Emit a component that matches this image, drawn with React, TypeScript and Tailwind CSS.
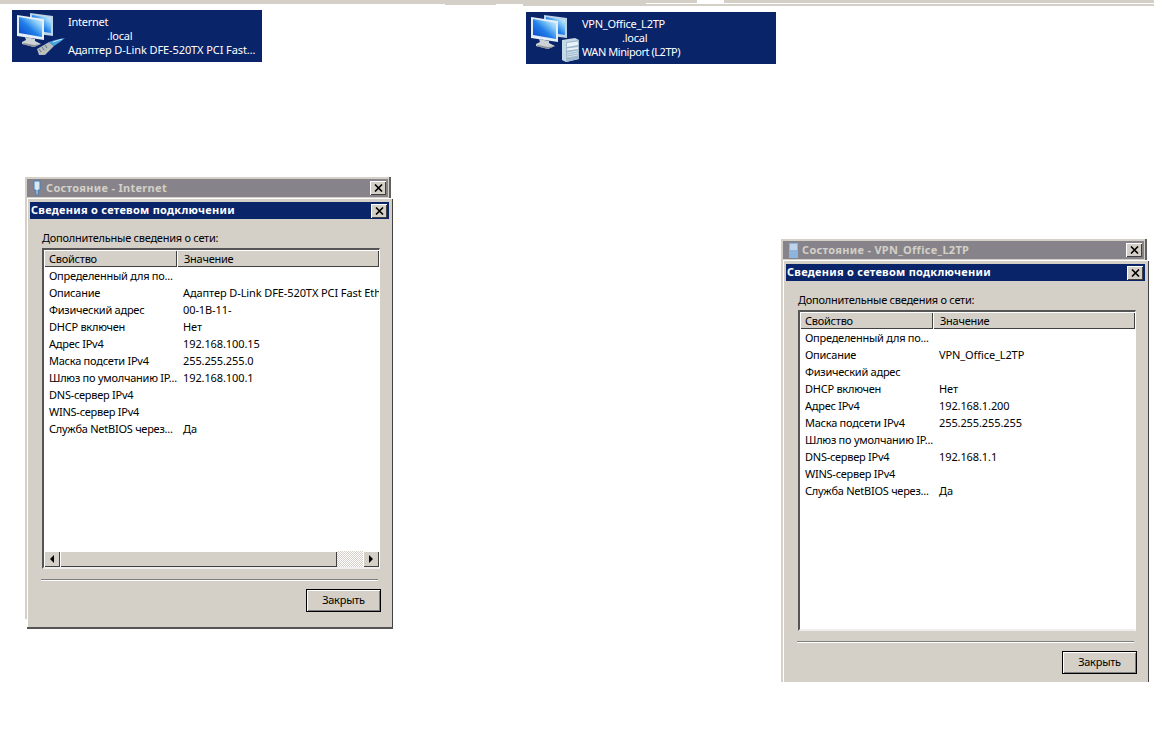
const font = "font-['Noto_Sans','Liberation_Sans',sans-serif]";

type Row = [string, string];

const internetRows: Row[] = [
  ["Определенный для по...", ""],
  ["Описание", "Адаптер D-Link DFE-520TX PCI Fast Ethernet Adapter"],
  ["Физический адрес", "00-1B-11-"],
  ["DHCP включен", "Нет"],
  ["Адрес IPv4", "192.168.100.15"],
  ["Маска подсети IPv4", "255.255.255.0"],
  ["Шлюз по умолчанию IP...", "192.168.100.1"],
  ["DNS-сервер IPv4", ""],
  ["WINS-сервер IPv4", ""],
  ["Служба NetBIOS через...", "Да"],
];

const vpnRows: Row[] = [
  ["Определенный для по...", ""],
  ["Описание", "VPN_Office_L2TP"],
  ["Физический адрес", ""],
  ["DHCP включен", "Нет"],
  ["Адрес IPv4", "192.168.1.200"],
  ["Маска подсети IPv4", "255.255.255.255"],
  ["Шлюз по умолчанию IP...", ""],
  ["DNS-сервер IPv4", "192.168.1.1"],
  ["WINS-сервер IPv4", ""],
  ["Служба NetBIOS через...", "Да"],
];

function Monitors({ id }: { id: string }) {
  return (
    <>
      <defs>
        <linearGradient id={id} x1="0" y1="1" x2="1" y2="0">
          <stop offset="0" stopColor="#0a3fc8" />
          <stop offset="0.45" stopColor="#1f7fe8" />
          <stop offset="0.75" stopColor="#8fd0fa" />
          <stop offset="1" stopColor="#e6f6ff" />
        </linearGradient>
      </defs>
      {/* back monitor */}
      <path d="M14 1 L37 4 L37 24 L14 21 Z" fill="#bcd4e8" />
      <path d="M16 3 L35 6 L35 21 L16 18 Z" fill={`url(#${id})`} />
      {/* front monitor */}
      <path d="M1 3 L28 7 L28 28 L1 24 Z" fill="#e4eef6" />
      <path d="M3 5 L26 9 L26 25 L3 21 Z" fill={`url(#${id})`} />
      {/* stand */}
      <path d="M9 25 L19 27 L19 29 L25 32 L18 35 L6 32 L6 30 L10 28 Z" fill="#cdd2d6" />
      <path d="M6 32 L18 35 L25 32 L18 33 L8 31 Z" fill="#8c9298" />
    </>
  );
}

function NetIcon() {
  return (
    <svg width="50" height="46" viewBox="0 0 50 46" className="shrink-0">
      <Monitors id="screen-net" />
      <path d="M21 37 L33 30 L38 34 L29 43 L23 43 Z" fill="#b4bdc0" />
      <path d="M23 37 L25 40 M26 35 L28 38 M29 33 L31 36" stroke="#6a767b" strokeWidth="1" />
      <path d="M25 42 L28 39 M29 41 L33 37" stroke="#d9c98a" strokeWidth="1" />
      <path d="M33 30 L39 28 L49 26 L44 30 L38 34 Z" fill="#49a5e0" />
      <path d="M37 30 L46 27" stroke="#bfe6fa" strokeWidth="1" />
    </svg>
  );
}

function TowerIcon() {
  return (
    <svg width="50" height="48" viewBox="0 0 50 48" className="shrink-0">
      <Monitors id="screen-vpn" />
      <path d="M32 26 L45 24 L49 26 L49 45 L36 48 L32 46 Z" fill="#c7d8e6" />
      <path d="M36 28 L49 26 L49 45 L36 48 Z" fill="#9fb9cf" />
      <path d="M37 29 L48 27.5 L48 31 L37 33 Z M37 34.5 L48 33 L48 35 L37 36.5 Z" fill="#eaf2f8" />
      <path d="M37 39 L48 37 M37 41 L48 39 M37 43 L48 41" stroke="#d6e3ee" strokeWidth="1" />
    </svg>
  );
}

function Banner({
  name,
  device,
  icon,
  dotLeft,
  deviceTracking,
}: {
  name: string;
  device: string;
  icon: React.ReactNode;
  dotLeft: string;
  deviceTracking: string;
}) {
  return (
    <div className={`flex h-[52px] w-[250px] bg-[#0a246a] pl-[4px] pt-[2px] text-[11px] leading-[14px] text-white ${font}`}>
      <div className="w-[52px] shrink-0">{icon}</div>
      <div className="pt-[3px] whitespace-nowrap tracking-[-0.25px]">
        <div>{name}</div>
        <div className={dotLeft}>.local</div>
        <div className={deviceTracking}>{device}</div>
      </div>
    </div>
  );
}

function CloseBtn() {
  return (
    <div className="flex h-[14px] w-[16px] items-center justify-center bg-[#d4d0c8] shadow-[inset_1px_1px_0_#fff,inset_-1px_-1px_0_#404040]">
      <svg width="9" height="8" viewBox="0 0 9 8">
        <path d="M1 0.5 L8 7.5 M8 0.5 L1 7.5" stroke="#000" strokeWidth="1.6" />
      </svg>
    </div>
  );
}

function HeaderCell({ label, className }: { label: string; className: string }) {
  return (
    <div className={`h-[17px] bg-[#d4d0c8] leading-[18px] shadow-[inset_1px_1px_0_#fff,inset_-1px_-1px_0_#404040] ${className}`}>
      {label}
    </div>
  );
}

function Arrow({ dir }: { dir: "left" | "right" }) {
  return (
    <div className="flex h-[16px] w-[16px] shrink-0 items-center justify-center bg-[#d4d0c8] shadow-[inset_1px_1px_0_#fff,inset_-1px_-1px_0_#404040]">
      <svg width="4" height="8" viewBox="0 0 4 8">
        <path d={dir === "left" ? "M4 0 L0 4 L4 8 Z" : "M0 0 L4 4 L0 8 Z"} fill="#000" />
      </svg>
    </div>
  );
}

function DetailsWindow({ rows, scrollbar, cut }: { rows: Row[]; scrollbar?: boolean; cut?: boolean }) {
  return (
    <div
      className={`flex w-[366px] flex-col bg-[#d4d0c8] pl-[3px] pr-[4px] pt-[4px] text-[11px] tracking-[-0.25px] text-black shadow-[inset_1px_1px_0_#fff,inset_-1px_0_0_#404040] ${font} ${
        cut ? "h-[422px]" : "h-[431px] border-b-2 border-[#555]"
      }`}
    >
      <div className="flex h-[17px] items-center justify-between bg-[#0a246a] pl-[1px] pr-[2px] text-[11px] font-bold tracking-[0.27px] text-white">
        <span>Сведения о сетевом подключении</span>
        <CloseBtn />
      </div>
      <div className="ml-[12px] mt-[11px] h-[15px] leading-[15px]">Дополнительные сведения о сети:</div>
      <div className="ml-[12px] mt-[3px] flex h-[321px] w-[338px] flex-col border-y-2 border-l-2 border-r border-y-[#555] border-l-[#555] border-r-white border-b-[#eeeeee] bg-white">
        <div className="flex shrink-0">
          <HeaderCell label="Свойство" className="w-[133px] pl-[5px]" />
          <HeaderCell label="Значение" className="flex-1 pl-[7px]" />
        </div>
        <div className="min-h-0 flex-1 overflow-hidden pt-[1px]">
          {rows.map(([k, v]) => (
            <div key={k} className="flex h-[17px] items-center whitespace-nowrap">
              <div className="w-[134px] shrink-0 pl-[5px]">{k}</div>
              <div className="pl-[5px] tracking-[-0.1px]">{v}</div>
            </div>
          ))}
        </div>
        {scrollbar && (
          <div className="flex h-[16px] shrink-0">
            <Arrow dir="left" />
            <div className="h-[16px] w-[277px] bg-[#d4d0c8] shadow-[inset_1px_1px_0_#fff,inset_-1px_-1px_0_#404040]" />
            <div className="h-[16px] flex-1 bg-[repeating-conic-gradient(#d4d0c8_0_25%,#fff_0_50%)] bg-[length:2px_2px]" />
            <Arrow dir="right" />
          </div>
        )}
      </div>
      <div className="ml-[11px] mt-[10px] h-[2px] w-[337px] border-t border-b border-t-[#808080] border-b-white" />
      <div className="ml-[276px] mt-[8px] flex h-[23px] w-[75px] items-center justify-center border border-black bg-[#d4d0c8] shadow-[inset_1px_1px_0_#fff,inset_-1px_-1px_0_#808080]">
        Закрыть
      </div>
    </div>
  );
}

function BackWindow({
  title,
  icon,
  height,
}: {
  title: string;
  icon: React.ReactNode;
  height: string;
}) {
  return (
    <div className={`w-[367px] bg-[#d4d0c8] pl-[3px] pr-[3px] pt-[3px] shadow-[inset_1px_1px_0_#fff,inset_-2px_0_0_#606060] ${height} ${font}`}>
      <div className="flex h-[18px] items-center justify-between bg-[#86848a] pl-[4px] pr-[2px] text-[11px] font-bold tracking-[0.3px] text-[#d4d0c8]">
        <div className="flex items-center gap-[3px]">
          {icon}
          <span>{title}</span>
        </div>
        <CloseBtn />
      </div>
    </div>
  );
}

function PlugGlyph() {
  return (
    <svg width="12" height="16" viewBox="0 0 12 16">
      <path d="M3 1 H9 V10 H7 V15 H5 V10 H3 Z" fill="#dce6ee" stroke="#3f7fc0" />
    </svg>
  );
}

function ServerGlyph() {
  return (
    <svg width="12" height="16" viewBox="0 0 12 16">
      <rect x="2" y="1" width="9" height="15" fill="#8db4dc" />
      <path d="M3 3 H10 M3 5 H10 M3 7 H10" stroke="#eef3f7" />
    </svg>
  );
}

export default function App() {
  return (
    <div className="relative h-[734px] w-[1154px] overflow-hidden bg-white">
      <div className="absolute left-0 top-0 h-[4px] w-[445px] bg-[#d4d0c8]" />
      <div className="absolute left-[445px] top-0 h-[5px] w-[51px] bg-[#d4d0c8]" />
      <div className="absolute left-[496px] top-0 h-[4px] w-[27px] bg-[#d4d0c8]" />
      <div className="absolute left-[523px] top-0 h-[6px] w-[123px] bg-[#d4d0c8]" />
      <div className="absolute left-[646px] top-0 h-[3px] w-[51px] bg-[#d4d0c8]" />
      <div className="absolute left-[724px] top-0 h-[3px] w-[430px] bg-[#d4d0c8]" />
      <div className="absolute left-[646px] top-[4px] h-[2px] w-[508px] bg-[#d4d0c8]" />

      <div className="absolute left-[12px] top-[10px]">
        <Banner name="Internet" device="Адаптер D-Link DFE-520TX PCI Fast…" icon={<NetIcon />} dotLeft="pl-[39px]" deviceTracking="tracking-[-0.09px]" />
      </div>
      <div className="absolute left-[526px] top-[12px]">
        <Banner name="VPN_Office_L2TP" device="WAN Miniport (L2TP)" icon={<TowerIcon />} dotLeft="pl-[40px]" deviceTracking="tracking-[-0.45px]" />
      </div>

      <div className="absolute left-[24px] top-[176px]">
        <BackWindow title="Состояние - Internet" icon={<PlugGlyph />} height="h-[443px]" />
      </div>
      <div className="absolute left-[27px] top-[198px]">
        <DetailsWindow rows={internetRows} scrollbar />
      </div>

      <div className="absolute left-[780px] top-[238px]">
        <BackWindow title="Состояние - VPN_Office_L2TP" icon={<ServerGlyph />} height="h-[444px]" />
      </div>
      <div className="absolute left-[783px] top-[260px]">
        <DetailsWindow rows={vpnRows} cut />
      </div>
    </div>
  );
}
